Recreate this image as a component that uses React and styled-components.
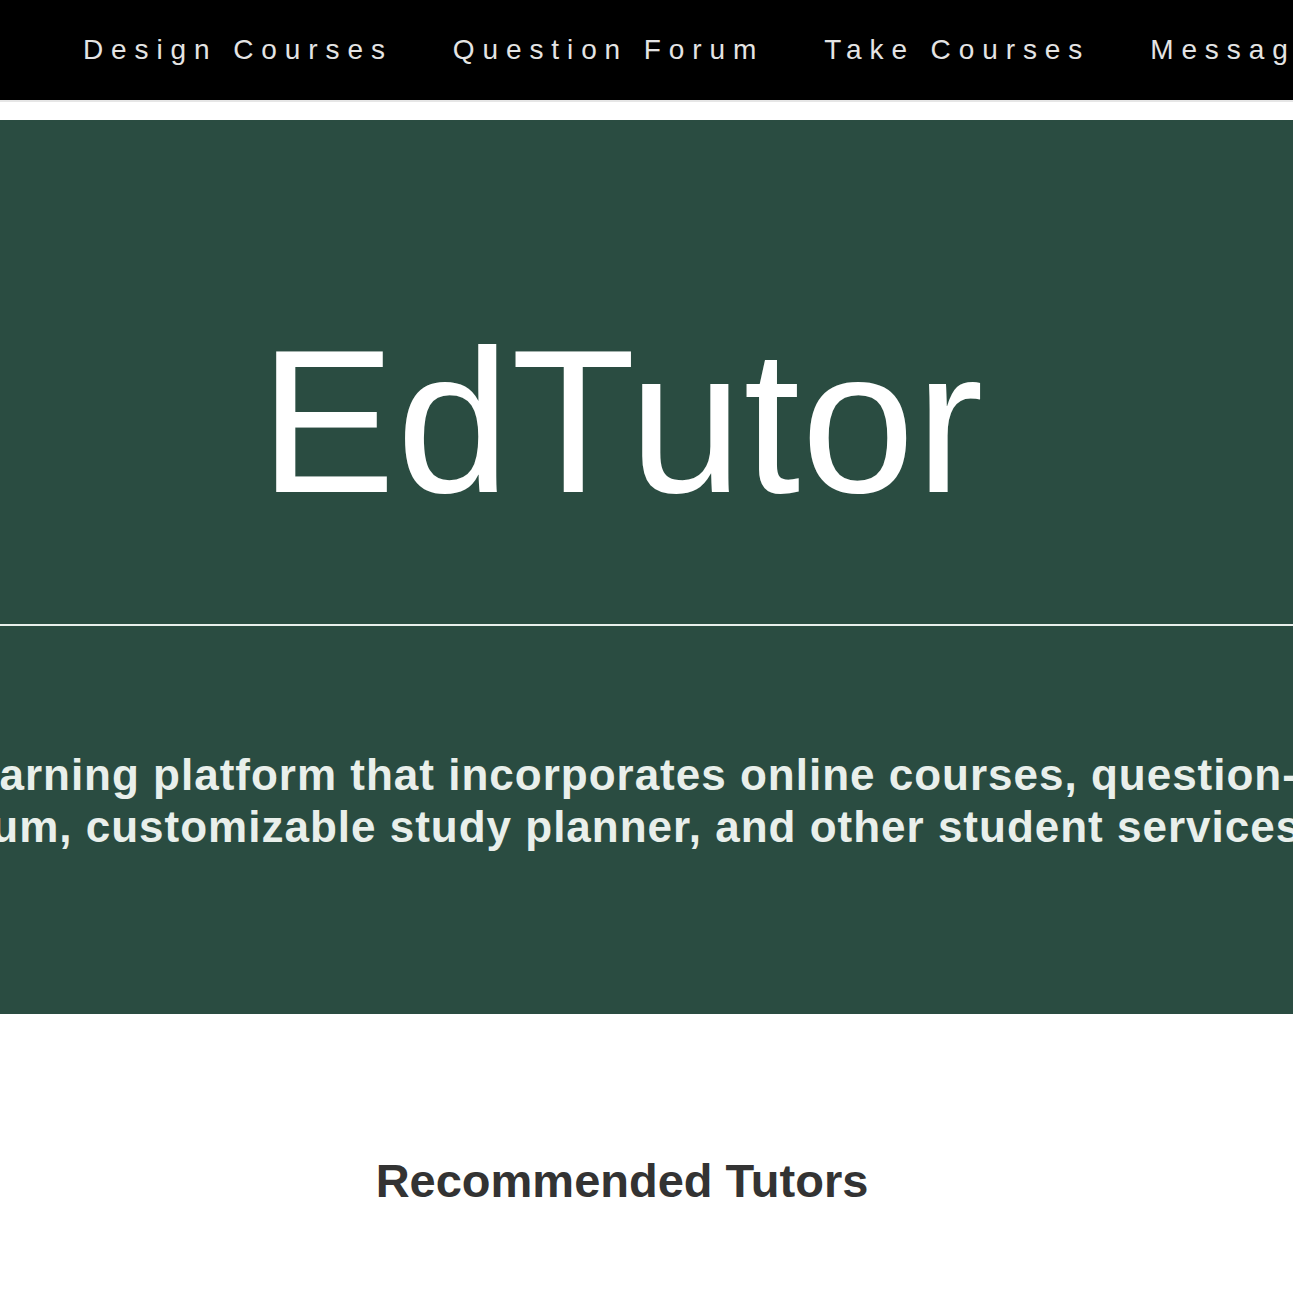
import React from "react";
import styled, { createGlobalStyle } from "styled-components";

const Global = createGlobalStyle`
  html, body {
    margin: 0;
    padding: 0;
    background: #ffffff;
    font-family: "Liberation Sans", Arial, Helvetica, sans-serif;
    overflow-x: hidden;
  }
  * { box-sizing: border-box; }
`;

const Page = styled.div`
  width: 100%;
  overflow: hidden;
`;

const NavBar = styled.nav`
  height: 102px;
  background: #000;
  border-bottom: 2px solid #e6e6e6;
  display: flex;
  align-items: center;
  padding-left: 83px;
  gap: 60px;
  white-space: nowrap;
  overflow: hidden;
`;

const NavItem = styled.a`
  font-size: 28px;
  letter-spacing: 7.9px;
  color: #e4e4e4;
  text-decoration: none;
  flex: none;
`;

const Hero = styled.section`
  margin-top: 18px;
  background: #2a4c41;
  display: flex;
  flex-direction: column;
`;

const TitleArea = styled.div`
  padding: 201px 49px 103px 0;
  display: flex;
  justify-content: center;
`;

const Title = styled.h1`
  margin: 0;
  font-size: 204px;
  line-height: 200px;
  letter-spacing: 1px;
  font-weight: 400;
  color: #ffffff;
  white-space: nowrap;
`;

const Divider = styled.hr`
  margin: 0;
  border: none;
  height: 2px;
  background: #e9efeb;
`;

const TaglineArea = styled.div`
  padding: 123px 49px 161px 0;
  display: flex;
  justify-content: center;
`;

const Tagline = styled.p`
  margin: 0;
  flex: none;
  font-size: 44px;
  line-height: 52px;
  font-weight: 700;
  letter-spacing: 1px;
  color: #e9efeb;
  text-align: center;
  white-space: nowrap;
`;

const TutorsSection = styled.section`
  padding: 139px 49px 120px 0;
  display: flex;
  justify-content: center;
`;

const SectionHeading = styled.h2`
  margin: 0;
  font-size: 47px;
  font-weight: 700;
  color: #333333;
  white-space: nowrap;
`;

export default function App() {
  const navItems = [
    "Design Courses",
    "Question Forum",
    "Take Courses",
    "Messages",
    "Study Planner",
  ];
  return (
    <Page>
      <Global />
      <NavBar>
        {navItems.map((n) => (
          <NavItem key={n} href="#">
            {n}
          </NavItem>
        ))}
      </NavBar>
      <Hero>
        <TitleArea>
          <Title>EdTutor</Title>
        </TitleArea>
        <Divider />
        <TaglineArea>
          <Tagline>
            Learning platform that incorporates online courses, question-
            <br />
            forum, customizable study planner, and other student services.
          </Tagline>
        </TaglineArea>
      </Hero>
      <TutorsSection>
        <SectionHeading>Recommended Tutors</SectionHeading>
      </TutorsSection>
    </Page>
  );
}
